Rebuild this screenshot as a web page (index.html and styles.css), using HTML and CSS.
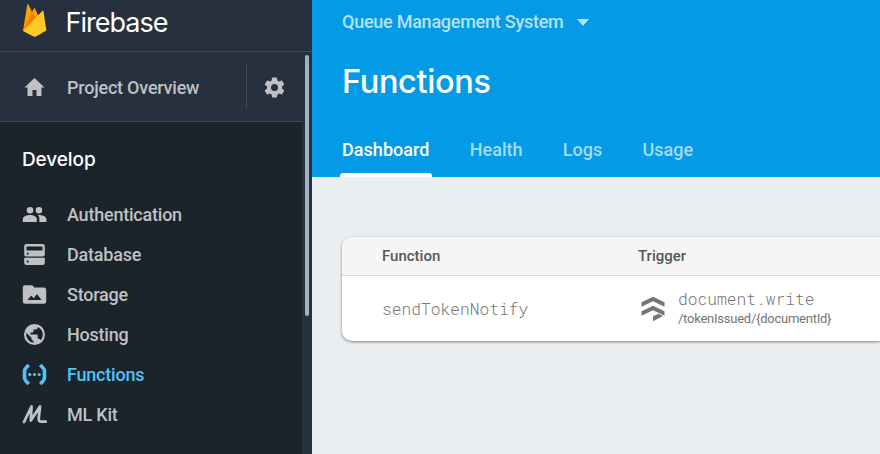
FILE: index.html
```html
<!DOCTYPE html>
<html lang="en">
<head>
<meta charset="utf-8">
<title>Functions</title>
<link rel="stylesheet" href="styles.css">
</head>
<body>
<div class="app">
  <aside class="sidebar">
    <header class="brand">
      <svg class="brand-logo" width="24" height="33" viewBox="0 0 24 33">
        <path fill="#ffa000" d="M0 27 4.2.8C4.400 0 5 0 5.500.6L9 8l2-3.400q.5-1 1 0L20 22z"/>
        <path fill="#f57c00" d="M0 27 9 8l4.500 7L16 20z"/>
        <path fill="#ffca28" d="M0 27 19.300 6.900q.8-.8 1.100.2L23.400 26.500 13 32.400q-1.300.8-2.600 0z"/>
      </svg>
      <span class="brand-name">Firebase</span>
    </header>
    <div class="sidebar-body">
      <div class="sidebar-content">
        <div class="overview">
          <a class="overview-link">
            <svg class="icon" viewBox="0 0 24 24"><path d="M10 20.500v-6h4v6h5V12h3L12 2.500 2 12h3v8.500z"/></svg>
            <span class="overview-label">Project Overview</span>
          </a>
          <button class="settings" aria-label="Settings">
            <svg class="icon" viewBox="0 0 24 24"><path d="M19.430 12.980c.04-.32.07-.64.07-.98s-.03-.66-.07-.98l2.110-1.650c.19-.15.24-.42.12-.64l-2-3.460c-.12-.22-.39-.3-.61-.22l-2.490 1c-.52-.4-1.080-.73-1.690-.98l-.38-2.650A.49.49 0 0 0 14 2h-4c-.25 0-.46.18-.49.42l-.38 2.650c-.61.25-1.170.59-1.690.98l-2.490-1c-.23-.09-.49 0-.61.22l-2 3.460c-.13.22-.07.49.12.64l2.110 1.650c-.04.32-.07.65-.07.98s.03.66.07.98l-2.110 1.650c-.19.15-.24.42-.12.64l2 3.460c.12.22.39.3.61.22l2.490-1c.52.4 1.080.73 1.690.98l.38 2.650c.03.24.24.42.49.42h4c.25 0 .46-.18.49-.42l.38-2.650c.61-.25 1.170-.59 1.690-.98l2.490 1c.23.09.49 0 .61-.22l2-3.460c.12-.22.07-.49-.12-.64zM12 15.500a3.500 3.500 0 1 1 0-7 3.500 3.500 0 0 1 0 7z"/></svg>
          </button>
        </div>
        <h2 class="group-title">Develop</h2>
        <nav class="nav">
          <a class="nav-item">
            <svg class="icon" viewBox="0 0 24 24"><path d="M16.500 11a3.300 3.300 0 1 0 0-6.600 3.300 3.300 0 0 0 0 6.600zm-9 0a3.300 3.300 0 1 0 0-6.600 3.300 3.300 0 0 0 0 6.600zM7.500 12.500C4.900 12.500.3 13.800.3 16.500v3h14v-3c0-2.700-4.200-4-6.800-4zm9 0-1.300.1c1.300.9 1.700 2.200 1.700 3.900v3h7v-3c0-2.700-4.800-4-7.400-4z"/></svg>
            <span>Authentication</span>
          </a>
          <a class="nav-item">
            <svg class="icon" viewBox="0 0 24 24"><path fill-rule="evenodd" d="M4 1.500h16a2.300 2.300 0 0 1 2.300 2.300V12a2 2 0 0 1-2 2H3.700a2 2 0 0 1-2-2V3.800A2.300 2.300 0 0 1 4 1.500zM4 4v4h16V4zm.2 6.200v1.800h1.900v-1.800zM1.700 15.200h20.600v5A2.300 2.300 0 0 1 20 22.500H4a2.300 2.300 0 0 1-2.300-2.300zM4.200 18v1.900h1.900V18z"/></svg>
            <span>Database</span>
          </a>
          <a class="nav-item">
            <svg class="icon" viewBox="0 0 24 24"><path fill-rule="evenodd" d="M2.700 2.700h6.800L12 5.100h9.300a2.400 2.400 0 0 1 2.400 2.300v11.700a2.300 2.300 0 0 1-2.400 2.200H2.700a2.400 2.400 0 0 1-2.400-2.300V5a2.400 2.400 0 0 1 2.400-2.300zM5 17.500h14l-4.500-6-3.300 4.300-2.400-2.900z"/></svg>
            <span>Storage</span>
          </a>
          <a class="nav-item">
            <svg class="icon" viewBox="0 0 24 24"><path d="M12 1.500a10.500 10.500 0 1 0 0 21 10.500 10.500 0 0 0 0-21zm-1 18.800A8.400 8.400 0 0 1 3.800 10.200L9 15.200v1.100a2 2 0 0 0 2 2zm7.200-2.600a2.100 2.100 0 0 0-2-1.400h-1v-3.200a1 1 0 0 0-1-1H8v-2.100h2a1 1 0 0 0 1-1v-2h2.100a2.100 2.100 0 0 0 2.100-2.100v-.5a8.400 8.400 0 0 1 3 13.300z"/></svg>
            <span>Hosting</span>
          </a>
          <a class="nav-item nav-item-active">
            <svg class="icon" viewBox="0 0 24 24"><path fill="none" stroke="currentColor" stroke-width="3.600" d="M6.300 2.400 3.600 5.300Q2 6.800 2 9v6q0 2.200 1.600 3.700l2.700 2.900M17.700 2.400l2.700 2.900Q22 6.800 22 9v6q0 2.200-1.600 3.700l-2.700 2.900"/><circle cx="7.300" cy="12" r="1.600"/><circle cx="12" cy="12" r="1.600"/><circle cx="16.700" cy="12" r="1.600"/></svg>
            <span>Functions</span>
          </a>
          <a class="nav-item">
            <svg class="icon" viewBox="0 0 24 24"><path fill="none" stroke="currentColor" stroke-width="2.800" stroke-linecap="round" stroke-linejoin="round" d="M1.500 19.500 9 4l-.7 14L17.500 4l-1.300 12q-.2 3.200 2.500 3.200h4.500"/></svg>
            <span>ML Kit</span>
          </a>
        </nav>
      </div>
      <div class="scroll-track"><div class="scroll-thumb"></div></div>
    </div>
  </aside>
  <main class="main">
    <header class="page-header">
      <div class="project"><span>Queue Management System</span><i class="caret"></i></div>
      <h1 class="page-title">Functions</h1>
      <nav class="tabs">
        <a class="tab tab-active">Dashboard</a>
        <a class="tab">Health</a>
        <a class="tab">Logs</a>
        <a class="tab">Usage</a>
      </nav>
    </header>
    <section class="card">
      <div class="row row-head"><span>Function</span><span>Trigger</span></div>
      <div class="row row-body">
        <span class="mono">sendTokenNotify</span>
        <div class="trigger">
          <svg class="trigger-icon" width="24" height="26" viewBox="0 0 24 26"><path d="M.5 6.300 12 .8l11.500 5.500v4.500L12 5.300.5 10.800zM.5 15.300 12 9.800l11.500 5.500v4.500L12 14.300.5 19.800zM12 20.300l5.500-2.500 4.500 2.300L12 25.200z"/></svg>
          <div class="trigger-text">
            <span class="mono event">document.write</span>
            <span class="path">/tokenIssued/{documentId}</span>
          </div>
        </div>
      </div>
    </section>
  </main>
</div>
</body>
</html>
```
FILE: styles.css
```css
* { box-sizing: border-box; }
body { margin: 0; overflow: hidden; font-family: Roboto, sans-serif; }
h1, h2 { margin: 0; font-weight: 500; }

.app { display: flex; width: 880px; height: 454px; }

.sidebar { display: flex; flex-direction: column; width: 312px; background: #27303e; color: #bfc1c4; }
.brand { display: flex; height: 52px; padding: 4px 0 0 23px; border-bottom: 1px solid #414956; }
.brand-logo { flex: none; }
.brand-name { margin-left: 18.500px; color: #fff; font: 400 27px/37px Inter, sans-serif; letter-spacing: -1px; }

.sidebar-body { display: flex; flex: 1; min-height: 0; }
.sidebar-content { width: 302px; background: #1b232b; }
.icon { display: block; width: 24px; height: 24px; overflow: visible; fill: currentColor; }
.icon > * { transform: translate(.5px, .5px); }

.overview { display: flex; align-items: center; height: 70px; background: #27303e; border-bottom: 1px solid #414956; }
.overview-link { display: flex; align-items: center; gap: 21px; width: 247px; height: 45px; padding: 1px 0 0 22px; border-right: 1px solid #414956; font-size: 18px; font-weight: 500; letter-spacing: -.22px; }
.settings { padding: 0; margin-left: 15px; border: 0; background: none; color: inherit; }

.group-title { height: 72px; padding: 22px 0 0 22px; color: #fff; font: 500 19px/31px Inter, sans-serif; letter-spacing: -.1px; }
.nav-item { display: flex; align-items: center; gap: 21px; height: 40px; padding-left: 22px; font-size: 18px; font-weight: 500; letter-spacing: -.22px; }
.nav-item-active { color: #4fc3f7; }

.scroll-track { width: 10px; padding: 3px 3px 0; background: #27303e; }
.scroll-thumb { width: 4px; height: 261px; border-radius: 2px; background: #a5afc4; }

.main { flex: 1; min-width: 0; background: #eaeef1; }
.page-header { display: flex; flex-direction: column; height: 177px; padding-left: 30px; background: #039be5; color: #fff; }
.project { display: flex; align-items: center; height: 44px; padding-bottom: 1px; color: #b3e1f7; font-size: 18px; font-weight: 500; letter-spacing: -.25px; }
.caret { margin: 2px 0 0 13px; border: 6.500px solid transparent; border-top: 7px solid #b3e1f7; border-bottom: 0; }
.page-title { height: 78px; font: 500 32.500px/75px Inter, sans-serif; letter-spacing: -.35px; }
.tabs { display: flex; gap: 40.300px; height: 55px; }
.tab { height: 55px; color: #a5dbf7; font-size: 18px; font-weight: 500; line-height: 55px; }
.tab-active { position: relative; color: #fff; letter-spacing: .05px; }
.tab-active::after { content: ""; position: absolute; left: -2px; right: -2px; bottom: 0; height: 4px; border-radius: 3px 3px 0 0; background: #fff; }

.card { margin: 60px 0 0 30px; border-radius: 10px 0 0 10px; background: #fff; box-shadow: 0 1px 3px rgba(0, 0, 0, .45); }
.row { display: grid; grid-template-columns: 256px 1fr; align-items: center; padding-left: 40px; }
.row-head { height: 39px; border-bottom: 1px solid #d8dadb; border-radius: 10px 0 0; background: #f5f5f5; color: #55585a; font-size: 15px; font-weight: 500; }
.row-body { height: 65px; color: #757575; }
.mono { font-family: "Roboto Mono", "Liberation Mono", monospace; font-size: 16.250px; font-weight: 300; }
.trigger { display: flex; align-items: center; }
.trigger-icon { margin-left: 3px; fill: #757575; }
.trigger-text { display: flex; flex-direction: column; margin: -1px 0 0 13px; }
.event { line-height: 20px; }
.path { font-size: 13px; line-height: 19px; letter-spacing: -.24px; }
```
